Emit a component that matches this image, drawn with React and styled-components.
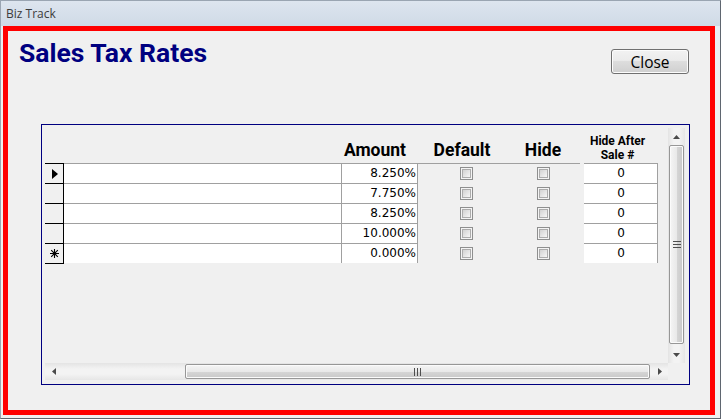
import React from 'react';
import styled, { createGlobalStyle } from 'styled-components';

const GlobalStyle = createGlobalStyle`
  html, body {
    margin: 0;
    padding: 0;
    background: #f0f0f0;
  }
  * {
    box-sizing: border-box;
  }
`;

const COLUMNS = '19px 278px 76px 88px 74px 4px 74px';

const rates = [
  { amount: '8.250%', marker: 'current' },
  { amount: '7.750%' },
  { amount: '8.250%' },
  { amount: '10.000%' },
  { amount: '0.000%', marker: 'new' }
];

const Window = styled.div`
  width: 721px;
  height: 419px;
  display: flex;
  flex-direction: column;
  border: 1px solid #9aa5b2;
  border-right-color: #5f6670;
  border-bottom-color: #5f6670;
  background: #eef1f5;
  overflow: hidden;
`;

const TitleBar = styled.div`
  height: 25px;
  flex: none;
  padding-left: 5px;
  background: linear-gradient(#dde5ef, #cfdae6);
  font-family: 'Open Sans', 'Noto Sans', sans-serif;
  font-size: 12px;
  line-height: 25px;
  color: #3c3c3c;
`;

const Body = styled.div`
  flex: 1;
  display: flex;
  padding: 0 5px 3px 2px;
  background: linear-gradient(to bottom, #e9eef4, #f0f0f0 60px);
`;

const Panel = styled.div`
  flex: 1;
  display: flex;
  flex-direction: column;
  border: 5px solid #ff0000;
  background: #f0f0f0;
`;

const Header = styled.div`
  height: 93px;
  flex: none;
  display: flex;
  justify-content: space-between;
  align-items: flex-start;
  padding: 0 21px 0 11px;
`;

const Title = styled.h1`
  margin: 6px 0 0;
  font-family: Roboto, 'Liberation Sans', sans-serif;
  font-weight: 700;
  font-size: 26.5px;
  line-height: 32px;
  color: #000080;
`;

const CloseButton = styled.button`
  margin-top: 18px;
  width: 78px;
  height: 25px;
  padding: 0;
  border: 1px solid #707070;
  border-radius: 3px;
  background: linear-gradient(#f2f2f2 0%, #ebebeb 45%, #dddddd 50%, #cfcfcf 100%);
  box-shadow: inset 0 0 0 1px #fcfcfc;
  font-family: 'Open Sans', 'Noto Sans', sans-serif;
  font-size: 15.5px;
  line-height: 22px;
  color: #000;
`;

const GridFrame = styled.div`
  width: 649px;
  height: 261px;
  margin-left: 33px;
  padding: 3px 4px 4px 3px;
  border: 1px solid #000080;
`;

const Viewport = styled.div`
  height: 100%;
  display: grid;
  grid-template-columns: 1fr 17px;
  grid-template-rows: 1fr 17px;
`;

const DataArea = styled.div`
  overflow: hidden;
`;

const Row = styled.div`
  display: grid;
  grid-template-columns: ${COLUMNS};
  height: ${(p) => p.$height || 20}px;
`;

const HeadCell = styled.div`
  display: flex;
  align-items: flex-end;
  justify-content: center;
  padding: 0 ${(p) => p.$shift || 0}px ${(p) => p.$bottom || 3}px 0;
  font-family: Roboto, 'Liberation Sans', sans-serif;
  font-weight: 700;
  font-size: ${(p) => p.$size || 17.5}px;
  line-height: ${(p) => p.$lh || 20}px;
  text-align: center;
  color: #000;
  white-space: nowrap;
`;

const RowHead = styled.div`
  display: flex;
  align-items: center;
  justify-content: center;
  padding-left: 1px;
  border-top: 1px solid #000;
  border-right: 1px solid #000;
  background: #f0f0f0;
  box-shadow: ${(p) => (p.$last ? '0 1px 0 #000' : 'none')};
`;

const TextCell = styled.div`
  padding: 0 1px 0 2px;
  border-top: 1px solid #a0a0a0;
  border-right: 1px solid #a0a0a0;
  background: #fff;
  font-family: 'DejaVu Sans', Verdana, sans-serif;
  font-size: 12px;
  line-height: 19px;
  text-align: ${(p) => p.$align || 'left'};
  color: #000;
  white-space: nowrap;
`;

const CheckCell = styled.div`
  display: flex;
  align-items: center;
  justify-content: center;
  padding-left: ${(p) => p.$indent || 0}px;
  border-top: 1px solid ${(p) => (p.$first ? '#a0a0a0' : 'transparent')};
`;

const Check = styled.span`
  position: relative;
  width: 13px;
  height: 13px;
  border: 1px solid #8e8f8f;
  background: #f4f4f4;

  &::after {
    content: '';
    position: absolute;
    inset: 1px;
    border: 1px solid #acacac;
    background: linear-gradient(135deg, #d2d2d2, #f6f6f6);
  }
`;

const VScroll = styled.div`
  display: flex;
  flex-direction: column;
  background: linear-gradient(to right, #e4e4e4, #f3f3f3 35%, #f3f3f3 65%, #e6e6e6);
`;

const HScroll = styled.div`
  display: flex;
  background: linear-gradient(#e4e4e4, #f3f3f3 35%, #f3f3f3 65%, #e6e6e6);
`;

const ArrowButton = styled.div`
  width: 17px;
  height: 17px;
  flex: none;
  display: flex;
  align-items: center;
  justify-content: center;
`;

const Track = styled.div`
  flex: 1;
  display: flex;
  flex-direction: ${(p) => (p.$vertical ? 'column' : 'row')};
  padding: ${(p) => (p.$vertical ? '0 1px 2px 1px' : '1px 1px 1px 123px')};
`;

const Thumb = styled.div`
  flex: 1;
  display: flex;
  align-items: center;
  justify-content: center;
  border: 1px solid #979797;
  border-radius: 2px;
  background: ${(p) =>
    p.$vertical
      ? 'linear-gradient(to right, #f5f5f5, #e9e9e9 50%, #d6d6d6 51%, #c9c9c9)'
      : 'linear-gradient(#f5f5f5, #e9e9e9 50%, #d6d6d6 51%, #c9c9c9)'};
  box-shadow: inset 0 0 0 1px #fbfbfb;
`;

const Corner = styled.div`
  background: #f0f0f0;
`;

const Marker = ({ type }) => {
  if (type === 'current') {
    return (
      <svg width="6" height="10" viewBox="0 0 6 10">
        <path d="M0 0L6 5L0 10Z" fill="#000" />
      </svg>
    );
  }
  if (type === 'new') {
    return (
      <svg width="9" height="9" viewBox="0 0 9 9">
        <path
          d="M4.5 0v9M0 4.5h9M1.2 1.2l6.6 6.6M7.8 1.2l-6.6 6.6"
          stroke="#000"
          strokeWidth="1.1"
        />
      </svg>
    );
  }
  return null;
};

const Arrow = ({ dir }) => {
  const paths = {
    up: 'M3.5 0L7 4H0Z',
    down: 'M0 0H7L3.5 4Z',
    left: 'M4 0V7L0 3.5Z',
    right: 'M0 0L4 3.5L0 7Z'
  };
  const vertical = dir === 'up' || dir === 'down';
  return (
    <svg width={vertical ? 7 : 4} height={vertical ? 4 : 7} viewBox={vertical ? '0 0 7 4' : '0 0 4 7'}>
      <path d={paths[dir]} fill="#4a4a4a" />
    </svg>
  );
};

const Grip = ({ vertical }) =>
  vertical ? (
    <svg width="8" height="7" viewBox="0 0 8 7">
      <path d="M0 0.5h8M0 3.5h8M0 6.5h8" stroke="#4e4e4e" />
    </svg>
  ) : (
    <svg width="7" height="8" viewBox="0 0 7 8">
      <path d="M0.5 0v8M3.5 0v8M6.5 0v8" stroke="#4e4e4e" />
    </svg>
  );

export default function App() {
  return (
    <>
      <GlobalStyle />
      <Window>
        <TitleBar>Biz Track</TitleBar>
        <Body>
          <Panel>
            <Header>
              <Title>Sales Tax Rates</Title>
              <CloseButton>Close</CloseButton>
            </Header>
            <GridFrame>
              <Viewport>
                <DataArea>
                  <Row $height={35}>
                    <div />
                    <div />
                    <HeadCell $shift={10}>Amount</HeadCell>
                    <HeadCell>Default</HeadCell>
                    <HeadCell>Hide</HeadCell>
                    <div />
                    <HeadCell $shift={7} $size={12} $lh={14} $bottom={1}>
                      Hide After
                      <br />
                      Sale #
                    </HeadCell>
                  </Row>
                  {rates.map((rate, i) => (
                    <Row key={i}>
                      <RowHead $last={i === rates.length - 1}>
                        <Marker type={rate.marker} />
                      </RowHead>
                      <TextCell />
                      <TextCell $align="right">{rate.amount}</TextCell>
                      <CheckCell $first={i === 0} $indent={8}>
                        <Check />
                      </CheckCell>
                      <CheckCell $first={i === 0}>
                        <Check />
                      </CheckCell>
                      <div />
                      <TextCell $align="center">0</TextCell>
                    </Row>
                  ))}
                </DataArea>
                <VScroll>
                  <ArrowButton>
                    <Arrow dir="up" />
                  </ArrowButton>
                  <Track $vertical>
                    <Thumb $vertical>
                      <Grip vertical />
                    </Thumb>
                  </Track>
                  <ArrowButton>
                    <Arrow dir="down" />
                  </ArrowButton>
                </VScroll>
                <HScroll>
                  <ArrowButton>
                    <Arrow dir="left" />
                  </ArrowButton>
                  <Track>
                    <Thumb>
                      <Grip />
                    </Thumb>
                  </Track>
                  <ArrowButton>
                    <Arrow dir="right" />
                  </ArrowButton>
                </HScroll>
                <Corner />
              </Viewport>
            </GridFrame>
          </Panel>
        </Body>
      </Window>
    </>
  );
}
